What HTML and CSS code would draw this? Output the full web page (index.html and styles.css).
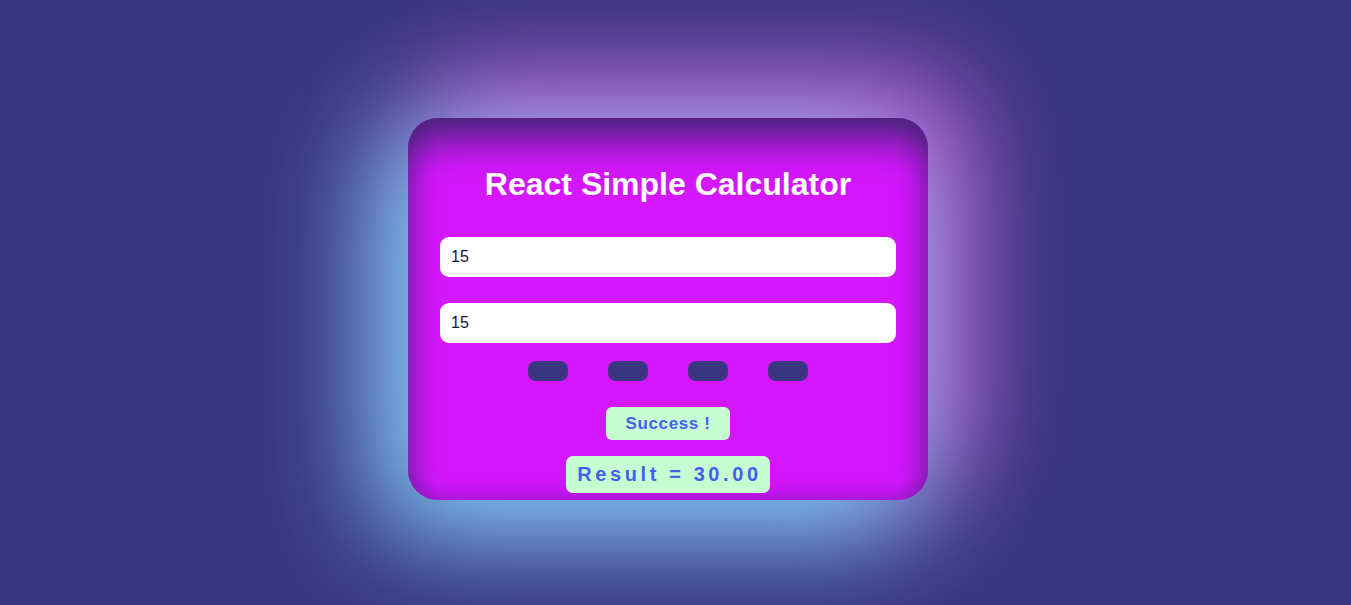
FILE: index.html
```html
<!DOCTYPE html>
<html>
<head>
<meta charset="utf-8">
<link rel="stylesheet" href="styles.css">
</head>
<body>
<div class="page">
  <div class="card">
    <h1 class="title">React Simple Calculator</h1>
    <input class="field first" type="text" value="15">
    <input class="field second" type="text" value="15">
    <div class="ops">
      <button class="op"></button>
      <button class="op"></button>
      <button class="op"></button>
      <button class="op"></button>
    </div>
    <div class="status">Success !</div>
    <div class="result">Result = 30.00</div>
  </div>
</div>
</body>
</html>
```
FILE: styles.css
```css
html, body {
  margin: 0;
  padding: 0;
  height: 100%;
  background: #3a3682;
  font-family: "Liberation Sans", Arial, sans-serif;
  overflow: hidden;
}
.page {
  display: flex;
  justify-content: center;
  padding-top: 118px;
  padding-right: 15px;
}
.card {
  box-sizing: border-box;
  width: 520px;
  height: 382px;
  padding: 48px 32px 0;
  border-radius: 30px;
  background: #d417fd;
  display: flex;
  flex-direction: column;
  align-items: center;
  box-shadow:
    -25px 25px 110px 10px rgba(115, 205, 240, 1),
    25px -25px 110px 10px rgba(220, 90, 225, 1),
    inset 0 28px 38px -6px rgba(60, 38, 110, 0.9),
    inset 0 0 24px rgba(80, 30, 140, 0.55);
}
.title {
  margin: 0;
  font-size: 32px;
  line-height: 37px;
  font-weight: 700;
  color: #ffffff;
}
.field {
  box-sizing: border-box;
  width: 456px;
  height: 40px;
  border: none;
  outline: none;
  border-radius: 9px;
  background: #fff;
  padding: 0 11px;
  font-family: "Liberation Sans", Arial, sans-serif;
  font-size: 16px;
  color: #0e1530;
}
.first { margin-top: 34px; }
.second { margin-top: 26px; }
.ops {
  display: flex;
  gap: 40px;
  margin-top: 18px;
}
.op {
  width: 40px;
  height: 20px;
  border: none;
  border-radius: 8px;
  background: #3a3682;
  padding: 0;
}
.status {
  margin-top: 26px;
  height: 33px;
  line-height: 33px;
  padding: 0 20px;
  border-radius: 6px;
  background: #c8fdd2;
  color: #4361ee;
  font-weight: 700;
  font-size: 17px;
  letter-spacing: 0.6px;
}
.result {
  margin-top: 16px;
  height: 37px;
  line-height: 37px;
  padding: 0 8px 0 11px;
  border-radius: 7px;
  background: #c8fdd2;
  color: #4361ee;
  font-weight: 700;
  font-size: 20px;
  letter-spacing: 3.6px;
}
```
